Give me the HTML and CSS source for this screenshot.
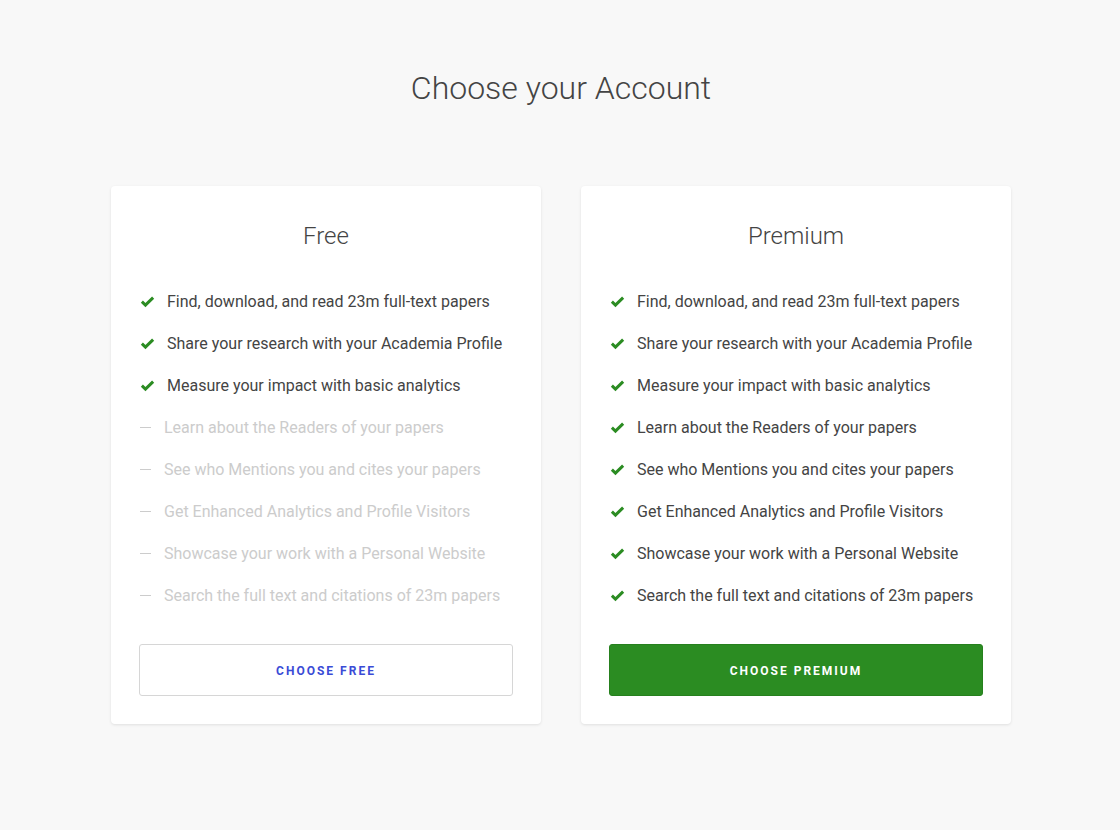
FILE: index.html
```html
<!DOCTYPE html>
<html>
<head>
<meta charset="utf-8">
<link rel="stylesheet" href="styles.css">
</head>
<body>
<main class="page">
  <h1 class="title">Choose your Account</h1>
  <div class="plans">
    <section class="card">
      <h2 class="plan-name">Free</h2>
      <ul class="features">
        <li class="on"><svg class="check" viewBox="0 0 16 16"><path d="M2 8.2l3.8 3.6L14 3.8"/></svg>Find, download, and read 23m full-text papers</li>
        <li class="on"><svg class="check" viewBox="0 0 16 16"><path d="M2 8.2l3.8 3.6L14 3.8"/></svg>Share your research with your Academia Profile</li>
        <li class="on"><svg class="check" viewBox="0 0 16 16"><path d="M2 8.2l3.8 3.6L14 3.8"/></svg>Measure your impact with basic analytics</li>
        <li class="off"><span class="dash"></span>Learn about the Readers of your papers</li>
        <li class="off"><span class="dash"></span>See who Mentions you and cites your papers</li>
        <li class="off"><span class="dash"></span>Get Enhanced Analytics and Profile Visitors</li>
        <li class="off"><span class="dash"></span>Showcase your work with a Personal Website</li>
        <li class="off"><span class="dash"></span>Search the full text and citations of 23m papers</li>
      </ul>
      <button class="btn btn-outline">CHOOSE FREE</button>
    </section>
    <section class="card">
      <h2 class="plan-name">Premium</h2>
      <ul class="features">
        <li class="on"><svg class="check" viewBox="0 0 16 16"><path d="M2 8.2l3.8 3.6L14 3.8"/></svg>Find, download, and read 23m full-text papers</li>
        <li class="on"><svg class="check" viewBox="0 0 16 16"><path d="M2 8.2l3.8 3.6L14 3.8"/></svg>Share your research with your Academia Profile</li>
        <li class="on"><svg class="check" viewBox="0 0 16 16"><path d="M2 8.2l3.8 3.6L14 3.8"/></svg>Measure your impact with basic analytics</li>
        <li class="on"><svg class="check" viewBox="0 0 16 16"><path d="M2 8.2l3.8 3.6L14 3.8"/></svg>Learn about the Readers of your papers</li>
        <li class="on"><svg class="check" viewBox="0 0 16 16"><path d="M2 8.2l3.8 3.6L14 3.8"/></svg>See who Mentions you and cites your papers</li>
        <li class="on"><svg class="check" viewBox="0 0 16 16"><path d="M2 8.2l3.8 3.6L14 3.8"/></svg>Get Enhanced Analytics and Profile Visitors</li>
        <li class="on"><svg class="check" viewBox="0 0 16 16"><path d="M2 8.2l3.8 3.6L14 3.8"/></svg>Showcase your work with a Personal Website</li>
        <li class="on"><svg class="check" viewBox="0 0 16 16"><path d="M2 8.2l3.8 3.6L14 3.8"/></svg>Search the full text and citations of 23m papers</li>
      </ul>
      <button class="btn btn-green">CHOOSE PREMIUM</button>
    </section>
  </div>
</main>
</body>
</html>
```
FILE: styles.css
```css
* { box-sizing: border-box; }
html, body { margin: 0; padding: 0; }
body {
  background: #f8f8f8;
  font-family: Roboto, "Liberation Sans", sans-serif;
  color: #444;
  width: 1120px;
  height: 830px;
}
.page {
  padding-top: 68px;
  padding-left: 2px;
  display: flex;
  flex-direction: column;
  align-items: center;
}
.title {
  margin: 0 0 78px;
  font-size: 32px;
  line-height: 40px;
  font-weight: 300;
  color: #444;
}
.plans {
  display: flex;
  gap: 40px;
}
.card {
  width: 430px;
  background: #fff;
  border-radius: 4px;
  box-shadow: 0 1px 3px rgba(0,0,0,0.10);
  padding: 28px;
}
.plan-name {
  margin: 8px 0 30px;
  text-align: center;
  font-size: 24px;
  line-height: 28px;
  font-weight: 300;
  color: #444;
}
.features {
  list-style: none;
  margin: 0 0 28px;
  padding: 0;
}
.features li {
  display: flex;
  align-items: center;
  height: 42px;
  font-size: 16px;
}
.features li.on { color: #444; }
.features li.off { color: #ccc; }
.check {
  width: 15px;
  height: 15px;
  margin-left: 1px;
  margin-right: 12px;
  flex: none;
}
.check path {
  fill: none;
  stroke: #2b8c22;
  stroke-width: 3.2;
  stroke-linecap: butt;
  stroke-linejoin: miter;
}
.dash {
  width: 11px;
  height: 1px;
  background: #ccc;
  margin-left: 1px;
  margin-right: 13px;
  flex: none;
}
.btn {
  display: block;
  width: 100%;
  height: 52px;
  padding: 1px 0 0;
  border-radius: 3px;
  font-family: Roboto, "Liberation Sans", sans-serif;
  font-size: 12px;
  font-weight: 700;
  letter-spacing: 2px;
  cursor: pointer;
}
.btn-outline {
  background: #fff;
  border: 1px solid #d6d6d6;
  color: #3a4bd6;
}
.btn-green {
  background: #2b8c22;
  border: 1px solid #26801e;
  color: #fff;
}
```
